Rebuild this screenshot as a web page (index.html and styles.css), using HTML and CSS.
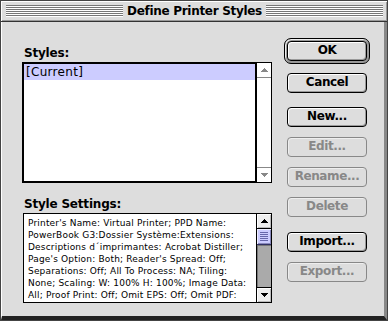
FILE: index.html
```html
<!DOCTYPE html>
<html>
<head>
<meta charset="utf-8">
<link rel="stylesheet" href="styles.css">
</head>
<body>
<div class="window">
  <div class="titlebar">
    <div class="stripes"></div>
    <div class="title">Define Printer Styles</div>
    <div class="stripes"></div>
  </div>
  <div class="content">
    <div class="left">
      <div class="label">Styles:</div>
      <div class="listbox focus">
        <div class="listpane">
          <div class="row selected">[Current]</div>
        </div>
        <div class="scrollbar inactive">
          <div class="arrow up">
            <svg width="7" height="4" shape-rendering="crispEdges"><rect x="3" y="0" width="1" height="1"/><rect x="2" y="1" width="3" height="1"/><rect x="1" y="2" width="5" height="1"/><rect x="0" y="3" width="7" height="1"/></svg>
          </div>
          <div class="track"></div>
          <div class="arrow down">
            <svg width="7" height="4" shape-rendering="crispEdges"><rect x="0" y="0" width="7" height="1"/><rect x="1" y="1" width="5" height="1"/><rect x="2" y="2" width="3" height="1"/><rect x="3" y="3" width="1" height="1"/></svg>
          </div>
        </div>
      </div>
      <div class="label label2">Style Settings:</div>
      <div class="listbox settings">
        <div class="textpane">
          <span class="line">Printer's Name: Virtual Printer; PPD Name:</span>
          <span class="line">PowerBook G3:Dossier Système:Extensions:</span>
          <span class="line">Descriptions d´imprimantes: Acrobat Distiller;</span>
          <span class="line">Page's Option: Both; Reader's Spread: Off;</span>
          <span class="line">Separations: Off; All To Process: NA; Tiling:</span>
          <span class="line">None; Scaling: W: 100% H: 100%; Image Data:</span>
          <span class="line">All; Proof Print: Off; Omit EPS: Off; Omit PDF:</span>
        </div>
        <div class="scrollbar active">
          <div class="arrow up">
            <svg width="7" height="4" shape-rendering="crispEdges"><rect x="3" y="0" width="1" height="1"/><rect x="2" y="1" width="3" height="1"/><rect x="1" y="2" width="5" height="1"/><rect x="0" y="3" width="7" height="1"/></svg>
          </div>
          <div class="thumb"><span class="grip"></span></div>
          <div class="track"></div>
          <div class="arrow down">
            <svg width="7" height="4" shape-rendering="crispEdges"><rect x="0" y="0" width="7" height="1"/><rect x="1" y="1" width="5" height="1"/><rect x="2" y="2" width="3" height="1"/><rect x="3" y="3" width="1" height="1"/></svg>
          </div>
        </div>
      </div>
    </div>
    <div class="right">
      <div class="ring"><div class="btn">OK</div></div>
      <div class="btn">Cancel</div>
      <div class="btn gap-a">New...</div>
      <div class="btn disabled">Edit...</div>
      <div class="btn disabled">Rename...</div>
      <div class="btn disabled">Delete</div>
      <div class="btn gap-b">Import...</div>
      <div class="btn disabled">Export...</div>
    </div>
  </div>
</div>
</body>
</html>
```

FILE: styles.css
```css
* { box-sizing: border-box; }
html, body { margin: 0; padding: 0; background: #dddddd; }

.window {
  width: 388px;
  height: 321px;
  background: #dddddd;
  border: 1px solid #444444;
  display: flex;
  flex-direction: column;
  overflow: hidden;
}

.titlebar {
  height: 21px;
  flex: none;
  display: flex;
  align-items: center;
  gap: 3px;
  padding: 0 4px 0 5px;
  background: #dddddd;
  border-bottom: 1px solid #333333;
  box-shadow: inset 1px 1px 0 #ffffff, inset -1px -1px 0 #999999;
}

.stripes {
  flex: 1;
  height: 12px;
  background: repeating-linear-gradient(to bottom, #777777 0 1px, #ffffff 1px 2px);
}

.title {
  font: bold 12px "DejaVu Sans", sans-serif;
  letter-spacing: -0.3px;
  color: #000;
  padding: 0 1px;
  line-height: 14px;
}

.content {
  flex: 1;
  display: grid;
  grid-template-columns: 250px 86px;
  column-gap: 12px;
  align-items: start;
  padding: 16px 0 0 20px;
  border-left: 1px solid #ffffff;
  border-right: 3px solid #888888;
  border-bottom: 4px solid #222222;
}

.label {
  font: bold 12px "DejaVu Sans", sans-serif;
  letter-spacing: -0.2px;
  line-height: 14px;
  height: 14px;
  margin-top: 8px;
  padding-left: 2px;
  color: #000;
}

.label2 { margin-top: 14px; }

.listbox {
  display: flex;
  margin-top: 2px;
}

.listbox.focus { height: 121px; }

.listpane {
  flex: 1;
  background: #ffffff;
  border: 2px solid #000000;
}

.row {
  height: 16px;
  font: 12px "DejaVu Sans", sans-serif;
  letter-spacing: 0.3px;
  line-height: 16px;
  padding-left: 2px;
  color: #000;
}

.row.selected { background: #ccccff; }

.scrollbar {
  width: 15px;
  flex: none;
  display: flex;
  flex-direction: column;
  border: 1px solid #000000;
  border-left: none;
  background: #ffffff;
}

.arrow {
  height: 15px;
  flex: none;
  display: flex;
  align-items: center;
  justify-content: center;
}

.scrollbar.inactive .arrow svg { fill: #888888; }
.scrollbar.inactive .arrow.up { border-bottom: 1px solid #888888; }
.scrollbar.inactive .arrow.down { border-top: 1px solid #888888; }
.scrollbar .track { flex: 1; }

.settings {
  height: 90px;
  margin-left: 1px;
}

.textpane {
  flex: 1;
  background: #ffffff;
  border: 1px solid #000000;
  padding: 3px 0 0 4px;
  font: 9px "DejaVu Sans", sans-serif;
  letter-spacing: 0.18px;
  line-height: 12px;
  color: #000;
  overflow: hidden;
}

.line { display: block; white-space: nowrap; }

.scrollbar.active .arrow {
  background: #eeeeee;
  box-shadow: inset 1px 1px 0 #ffffff, inset -1px -1px 0 #bbbbbb;
}
.scrollbar.active .arrow svg { fill: #000000; }
.scrollbar.active .arrow.up { border-bottom: 1px solid #000000; height: 15px; }
.scrollbar.active .arrow.down { border-top: 1px solid #000000; height: 15px; }

.thumb {
  height: 16px;
  flex: none;
  background: #ccccff;
  border-bottom: 1px solid #333366;
  box-shadow: inset 1px 1px 0 #eeeeff, inset -1px -1px 0 #8888bb;
  display: flex;
  align-items: center;
  justify-content: center;
}

.grip {
  width: 8px;
  height: 9px;
  background: repeating-linear-gradient(to bottom, #6666aa 0 1px, transparent 1px 2px);
}

.scrollbar.active .track {
  background: #aaaaaa;
  box-shadow: inset 1px 1px 0 #777777;
}

.right {
  display: flex;
  flex-direction: column;
  gap: 10px;
}

.ring {
  width: 86px;
  border: 1px solid #000000;
  border-radius: 7px;
  padding: 2px;
  background: #999999;
  box-shadow: inset 1px 1px 0 #eeeeee;
  margin-bottom: -1px;
}

.btn {
  width: 80px;
  height: 20px;
  margin-left: 3px;
  border: 1px solid #000000;
  border-radius: 4px;
  background: #dddddd;
  box-shadow: inset 1px 1px 0 #ffffff, inset -1px -1px 0 #999999;
  font: bold 12px "DejaVu Sans", sans-serif;
  letter-spacing: -0.4px;
  line-height: 17px;
  text-align: center;
  color: #000;
}

.ring .btn { margin-left: 0; }

.btn.disabled {
  border-color: #888888;
  color: #888888;
  box-shadow: inset 1px 1px 0 #eeeeee;
}

.gap-a { margin-top: 4px; }
.gap-b { margin-top: 5px; }
```
